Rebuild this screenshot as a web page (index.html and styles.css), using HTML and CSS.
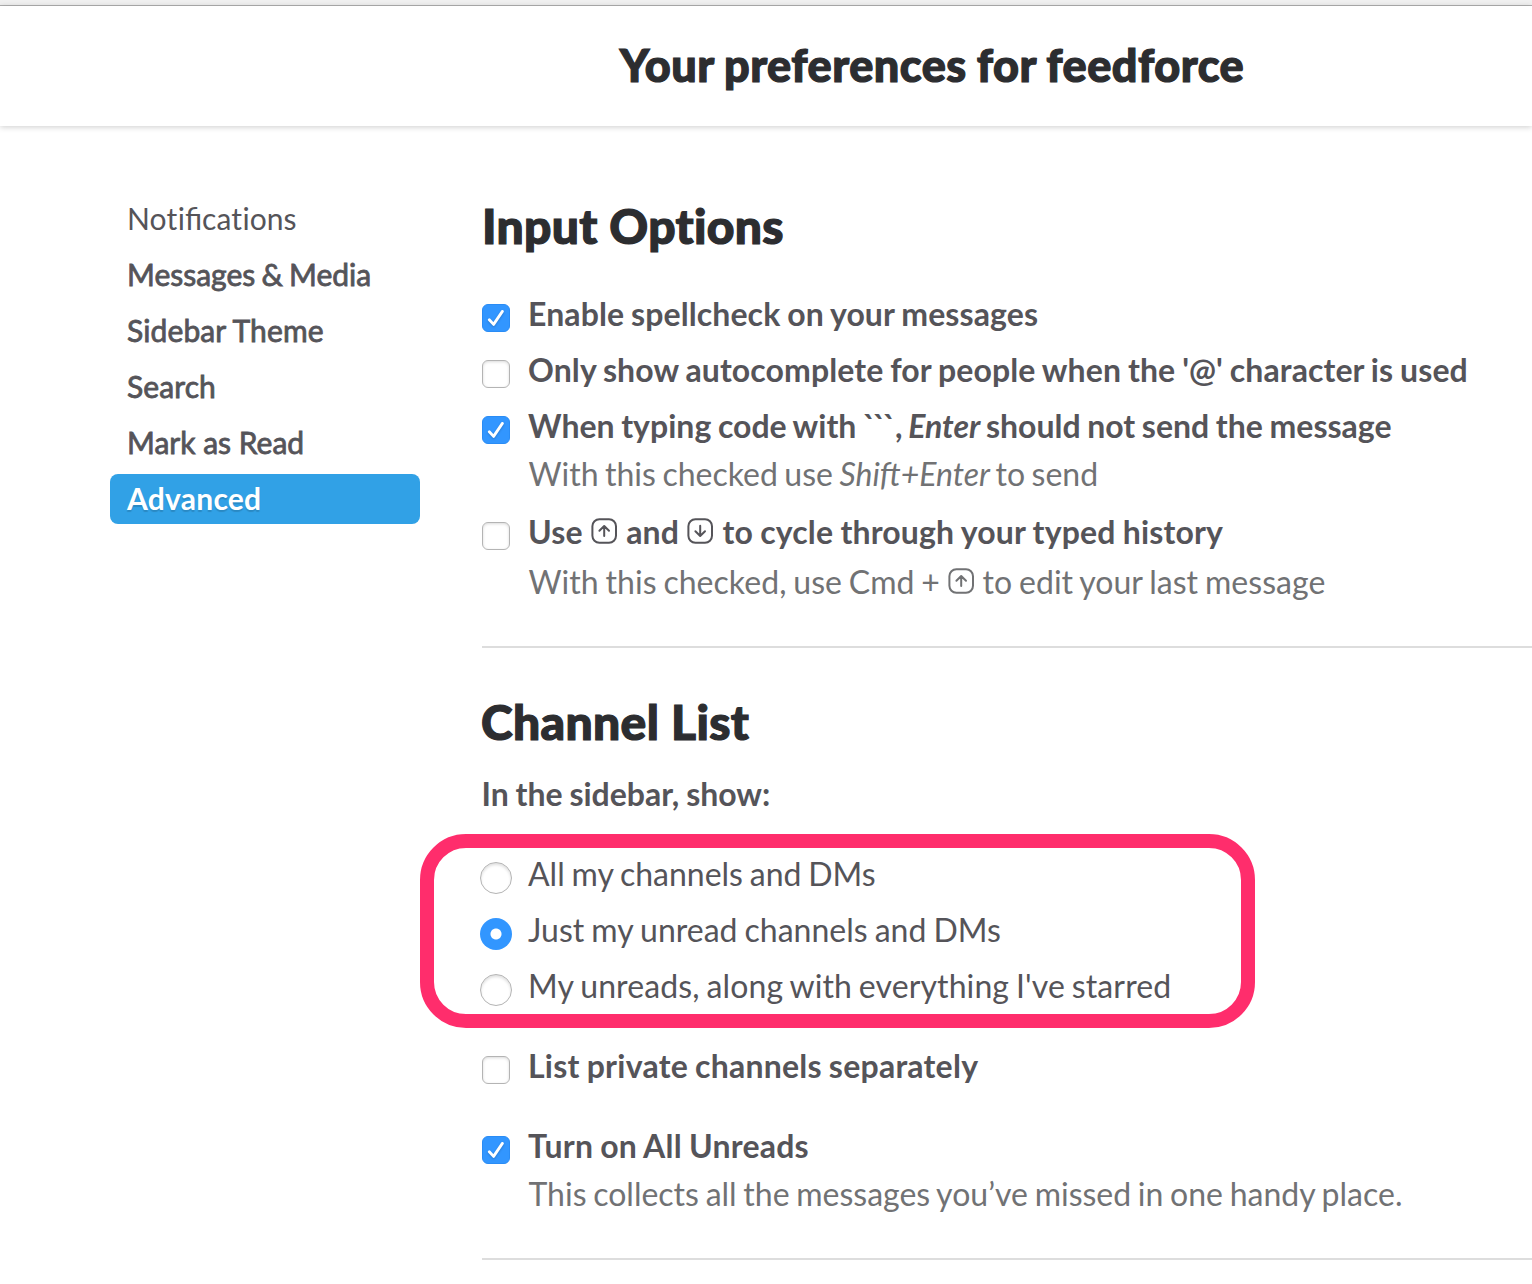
FILE: index.html
```html
<!DOCTYPE html>
<html lang="en">
<head>
<meta charset="utf-8">
<title>Your preferences for feedforce</title>
<link rel="stylesheet" href="styles.css">
</head>
<body>
<svg class="sprite" aria-hidden="true">
  <symbol id="key-up" viewBox="0 0 28 28"><rect x="2.4" y="2.2" width="23.6" height="23.6" rx="7"/><path d="M14.2 19V9.2M9.4 13.8l4.8-4.8 4.8 4.8"/></symbol>
  <symbol id="key-down" viewBox="0 0 28 28"><rect x="2.4" y="2.2" width="23.6" height="23.6" rx="7"/><path d="M14.2 8.8v10M9.4 14.2l4.8 4.8 4.8-4.8"/></symbol>
  <symbol id="tick" viewBox="0 0 28 28"><path d="M7.3 15.7l4.3 4.7L20.4 7.4"/></symbol>
</svg>
<div class="topbar"></div>
<header class="header"><h1 class="title">Your preferences for feedforce</h1></header>
<div class="layout">
  <nav class="nav">
    <a class="nav-item nav-item-light">No<span class="plain">t</span>ifica<span class="plain">t</span>ions</a>
    <a class="nav-item nav-item-tight">Messages &amp; Media</a>
    <a class="nav-item nav-item-wide">Sidebar Theme</a>
    <a class="nav-item nav-item-wide">Search</a>
    <a class="nav-item">Mark as Read</a>
    <a class="nav-item nav-item-active">Advanced</a>
  </nav>
  <main class="content">
    <section class="section">
      <h2 class="heading">Input Options</h2>
      <div class="options">
        <div class="option"><span class="checkbox checked"><svg class="tick"><use href="#tick"/></svg></span><div class="label">Enable spellcheck on your messages</div></div>
        <div class="option"><span class="checkbox"></span><div class="label">Only show autocomplete for people when the '@' character is used</div></div>
        <div class="option"><span class="checkbox checked"><svg class="tick"><use href="#tick"/></svg></span><div>
          <div class="label label-code">When typing code with <span class="ticks">```</span>, <em>Enter</em> should not send the message</div>
          <div class="note note-send">With this checked use <em>Shift+Enter</em> to send</div></div></div>
        <div class="option option-keys"><span class="checkbox"></span><div>
          <div class="label label-keys">Use <svg class="key"><use href="#key-up"/></svg> and <svg class="key"><use href="#key-down"/></svg> to cycle through your typed history</div>
          <div class="note note-keys">With this checked, use Cmd + <svg class="key"><use href="#key-up"/></svg> to edit your last message</div></div></div>
      </div>
    </section>
    <section class="section">
      <h2 class="heading heading-list">Channel List</h2>
      <p class="label intro">In the sidebar, show:</p>
      <div class="options radios">
        <div class="option"><span class="radio"></span><div class="choice">All my channels and DMs</div></div>
        <div class="option"><span class="radio selected"></span><div class="choice choice-unread">Just my unread channels and DMs</div></div>
        <div class="option"><span class="radio"></span><div class="choice choice-long">My unreads, along with everything I've starred</div></div>
        <div class="highlight"></div>
      </div>
      <div class="option spaced"><span class="checkbox"></span><div class="label label-wide">List private channels separately</div></div>
      <div class="option spaced"><span class="checkbox checked"><svg class="tick"><use href="#tick"/></svg></span><div>
        <div class="label label-wide">Turn on All Unreads</div>
        <div class="note">This collects all the messages you’ve missed in one handy place.</div></div></div>
    </section>
  </main>
</div>
</body>
</html>
```
FILE: styles.css
```css
* { box-sizing: border-box; }
body { margin: 0; height: 1284px; overflow: hidden; background: #fff; color: #555459; font-family: Lato, sans-serif; font-size: 32px; line-height: 48px; }
h1, h2, p { margin: 0; }
.sprite { position: absolute; width: 0; height: 0; }
.topbar { height: 6px; background: #f0f0f0; border-bottom: 1px solid #b1b1b1; }
.header { height: 120px; padding: 0 0 2px 332px; display: flex; justify-content: center; align-items: center; box-shadow: 0 1px 6px rgba(0, 0, 0, .2); }
.title { font-size: 45px; font-weight: 900; line-height: 64px; letter-spacing: .5px; word-spacing: -1px; color: #2c2d30; white-space: nowrap; -webkit-text-stroke: 1.2px #2c2d30; }
.layout { display: flex; gap: 62px; padding: 68px 0 0 110px; }
.nav { width: 310px; flex: none; display: flex; flex-direction: column; gap: 6px; }
.nav-item { height: 50px; padding-left: 17px; border-radius: 8px; font-size: 30px; line-height: 48px; -webkit-text-stroke: .8px #555459; }
.nav-item-light { -webkit-text-stroke: 0; }
.nav-item-tight { word-spacing: -1.5px; }
.nav-item-wide { letter-spacing: .1px; }
.plain { font-variant-ligatures: none; margin-right: .5px; }
.nav-item-active { background: #31a1e6; color: #fff; font-weight: 700; letter-spacing: .25px; -webkit-text-stroke: 0; text-shadow: 0 2px 1px rgba(0, 0, 0, .15); }
.content { flex: 1; min-width: 0; }
.section { padding-bottom: 40px; border-bottom: 2px solid #ddd; margin-bottom: 42px; }
.heading { font-size: 48px; line-height: 64px; font-weight: 900; letter-spacing: .3px; color: #2c2d30; -webkit-text-stroke: 1.2px #2c2d30; }
.heading-list { margin-left: -1px; letter-spacing: .35px; }
.heading + .options { margin-top: 32px; }
.options { display: flex; flex-direction: column; gap: 8px; }
.option { display: flex; white-space: nowrap; }
.option-keys { margin-top: 2px; }
.label { font-weight: 700; letter-spacing: .1px; word-spacing: -1px; }
.label-code { letter-spacing: .01px; word-spacing: -1.2px; }
.label-code em { margin: 0 -1px; }
.label-keys { letter-spacing: .15px; word-spacing: -.7px; }
.label-wide { letter-spacing: .24px; }
.ticks { letter-spacing: -2.8px; margin-right: 2px; }
.note { color: #717274; padding-left: .5px; word-spacing: -1.5px; }
.note-send { word-spacing: -1.7px; }
.note-send em { margin-right: -1px; }
.note-keys { margin-top: 2px; word-spacing: -1.4px; letter-spacing: .04px; }
.intro { margin: 16px 0 0 -.5px; letter-spacing: 0; }
.radios { position: relative; margin-top: 32px; }
.choice { word-spacing: -1.4px; }
.choice-unread { word-spacing: -1.1px; }
.choice-long { letter-spacing: .11px; }
.spaced { margin-top: 32px; }
.checkbox { flex: none; width: 28px; height: 28px; margin: 14px 18px 0 0; border: 1px solid #b4b4b4; border-radius: 6px; background: #fff; box-shadow: inset 0 1px 3px rgba(0, 0, 0, .15); }
.checked { border-color: #2a8cf5; background: #3296ff; box-shadow: none; }
.tick { display: block; width: 28px; height: 28px; margin: -1px; fill: none; stroke: #fff; stroke-width: 2.8; stroke-linecap: round; stroke-linejoin: round; filter: drop-shadow(0 1px 1px rgba(0, 0, 0, .2)); }
.radio { flex: none; width: 32px; height: 32px; margin: 12px 16px 0 -2px; border: 1px solid #b4b4b4; border-radius: 50%; background: #fff; box-shadow: inset 0 2px 3px rgba(0, 0, 0, .13); }
.selected { border: 0; background: radial-gradient(circle, #fff 5px, #3296ff 6px); box-shadow: none; }
.key { display: inline-block; width: 28px; height: 28px; margin-right: 1px; fill: none; stroke: currentColor; stroke-width: 2; stroke-linecap: round; stroke-linejoin: round; vertical-align: -1px; }
.highlight { position: absolute; left: -62px; top: -16px; width: 835px; height: 194px; border: 14px solid #ff2d6c; border-radius: 46px; }
```
